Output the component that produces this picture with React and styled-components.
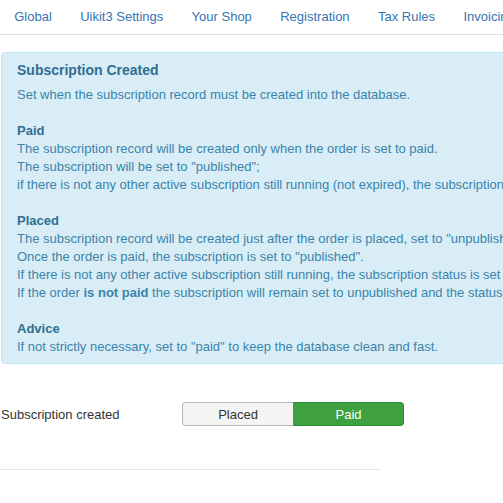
import React from 'react';
import styled, { createGlobalStyle } from 'styled-components';

const GlobalStyle = createGlobalStyle`
    html, body {
        margin: 0;
        padding: 0;
        background: #ffffff;
        overflow: hidden;
    }
    body {
        font-family: "Liberation Sans", Arial, sans-serif;
        font-size: 13px;
        color: #333333;
    }
`;

const Page = styled.div`
    width: 900px;
`;

const Tabs = styled.ul`
    display: flex;
    margin: 0;
    padding: 0;
    list-style: none;
    border-bottom: 1px solid #dddddd;
    height: 34px;
`;

const Tab = styled.li`
    padding: 0 14.2px;
    line-height: 34px;
    color: #3774b0;
    font-size: 13px;
    white-space: nowrap;
`;

const Alert = styled.div`
    margin: 17px 0 0 1px;
    padding: 7px 15px 7px;
    background: #d9edf7;
    border: 1px solid #bce8f1;
    border-radius: 4px;
    color: #3a84aa;
    line-height: 18px;
    white-space: nowrap;
`;

const AlertTitle = styled.h4`
    margin: 0 0 6px;
    font-size: 14px;
    line-height: 20px;
    font-weight: bold;
    color: #2f6f92;
`;

const Block = styled.div`
    margin-bottom: ${p => (p.$last ? '0' : '18px')};
`;

const BlockTitle = styled.div`
    font-weight: bold;
    color: #2f6f92;
`;

const Line = styled.div``;

const FormRow = styled.div`
    display: flex;
    align-items: center;
    margin-top: 38px;
    padding-left: 1px;
`;

const Label = styled.label`
    width: 181px;
    color: #333333;
    font-size: 13px;
`;

const Toggle = styled.div`
    display: flex;
`;

const ToggleButton = styled.button`
    width: 111px;
    height: 24px;
    padding: 0;
    font-family: "Liberation Sans", Arial, sans-serif;
    font-size: 13px;
    cursor: pointer;
    border: 1px solid ${p => (p.$active ? '#2e8a30' : '#b9b9b9')};
    background: ${p => (p.$active ? '#3ea03e' : '#f4f4f4')};
    color: ${p => (p.$active ? '#ffffff' : '#333333')};
    border-radius: ${p => (p.$first ? '4px 0 0 4px' : '0 4px 4px 0')};
    ${p => (p.$first ? 'border-right: none;' : 'border-left-color: #3ea03e;')}
`;

const Divider = styled.hr`
    width: 381px;
    margin: 43px 0 0;
    border: none;
    border-top: 1px solid #e5e5e5;
`;

const tabs = ['Global', 'Uikit3 Settings', 'Your Shop', 'Registration', 'Tax Rules', 'Invoicing', 'Emails'];

export default function App () {
    return (
        <Page>
            <GlobalStyle />
            <Tabs>
                {tabs.map(t => <Tab key={t}>{t}</Tab>)}
            </Tabs>

            <Alert>
                <AlertTitle>Subscription Created</AlertTitle>
                <Block>Set when the subscription record must be created into the database.</Block>

                <Block>
                    <BlockTitle>Paid</BlockTitle>
                    <Line>The subscription record will be created only when the order is set to paid.</Line>
                    <Line>The subscription will be set to "published";</Line>
                    <Line>if there is not any other active subscription still running (not expired), the subscription status is set to active.</Line>
                </Block>

                <Block>
                    <BlockTitle>Placed</BlockTitle>
                    <Line>The subscription record will be created just after the order is placed, set to "unpublished".</Line>
                    <Line>Once the order is paid, the subscription is set to "published".</Line>
                    <Line>If there is not any other active subscription still running, the subscription status is set to active.</Line>
                    <Line>If the order <b>is not paid</b> the subscription will remain set to unpublished and the status will not change.</Line>
                </Block>

                <Block $last>
                    <BlockTitle>Advice</BlockTitle>
                    <Line>If not strictly necessary, set to "paid" to keep the database clean and fast.</Line>
                </Block>
            </Alert>

            <FormRow>
                <Label>Subscription created</Label>
                <Toggle>
                    <ToggleButton $first>Placed</ToggleButton>
                    <ToggleButton $active>Paid</ToggleButton>
                </Toggle>
            </FormRow>

            <Divider />
        </Page>
    );
}
